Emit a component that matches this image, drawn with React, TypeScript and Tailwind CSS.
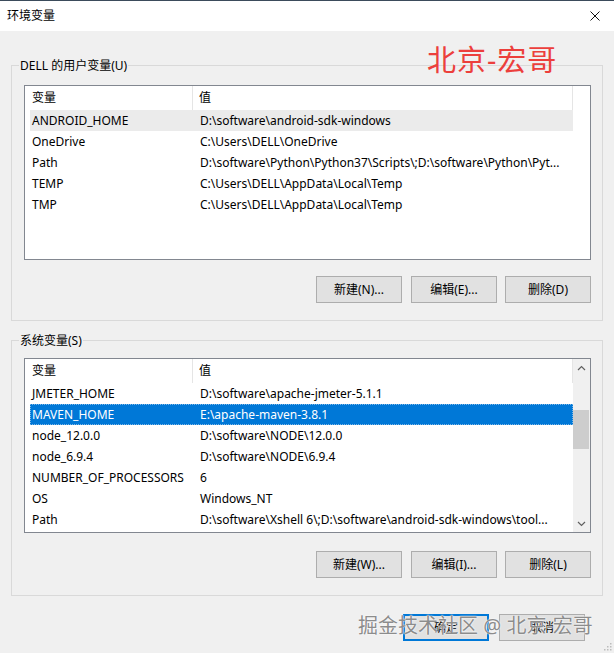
import React from "react";

type Row = { name: string; value: string; state?: "hover" | "selected" };

const userVars: Row[] = [
  { name: "ANDROID_HOME", value: "D:\\software\\android-sdk-windows", state: "hover" },
  { name: "OneDrive", value: "C:\\Users\\DELL\\OneDrive" },
  { name: "Path", value: "D:\\software\\Python\\Python37\\Scripts\\;D:\\software\\Python\\Pyt..." },
  { name: "TEMP", value: "C:\\Users\\DELL\\AppData\\Local\\Temp" },
  { name: "TMP", value: "C:\\Users\\DELL\\AppData\\Local\\Temp" },
];

const systemVars: Row[] = [
  { name: "JMETER_HOME", value: "D:\\software\\apache-jmeter-5.1.1" },
  { name: "MAVEN_HOME", value: "E:\\apache-maven-3.8.1", state: "selected" },
  { name: "node_12.0.0", value: "D:\\software\\NODE\\12.0.0" },
  { name: "node_6.9.4", value: "D:\\software\\NODE\\6.9.4" },
  { name: "NUMBER_OF_PROCESSORS", value: "6" },
  { name: "OS", value: "Windows_NT" },
  { name: "Path", value: "D:\\software\\Xshell 6\\;D:\\software\\android-sdk-windows\\tool..." },
];

const WinButton: React.FC<{ label: string; isDefault?: boolean }> = ({ label, isDefault }) => (
  <button
    type="button"
    className={
      isDefault
        ? "w-[86px] h-[27px] bg-[#e1e1e1] border-2 border-[#0078d7] text-[12px] text-black"
        : "w-[86px] h-[27px] bg-[#e1e1e1] border border-[#adadad] text-[12px] text-black"
    }
  >
    {label}
  </button>
);

const Chevron: React.FC<{ up?: boolean }> = ({ up }) => (
  <svg width="9" height="6" viewBox="0 0 9 6" className="block">
    <path
      d={up ? "M1 5 L4.5 1.5 L8 5" : "M1 1 L4.5 4.5 L8 1"}
      fill="none"
      stroke="#606060"
      strokeWidth="1.2"
    />
  </svg>
);

const VarList: React.FC<{ rows: Row[]; scrollbar?: boolean }> = ({ rows, scrollbar }) => (
  <div className="h-[175px] border border-[#828790] bg-white flex">
    <div className="w-[548px] flex flex-col">
      {/* column header */}
      <div className="h-[24px] flex items-center border-r border-[#e5e5e5] shrink-0">
        <div className="w-[168px] h-full flex items-center pl-[7px] border-r border-[#e5e5e5]">变量</div>
        <div className="flex-1 h-full flex items-center pl-[6px]">值</div>
      </div>
      {rows.map((r) => (
        <div
          key={r.name + r.value}
          className={
            r.state === "selected"
              ? "ml-[5px] h-[21px] shrink-0 flex items-center bg-[#0078d7] text-white outline outline-1 outline-dotted outline-[#7fb7e6] -outline-offset-1"
              : r.state === "hover"
              ? "ml-[5px] h-[21px] shrink-0 flex items-center bg-[#ebebeb]"
              : "ml-[5px] h-[21px] shrink-0 flex items-center"
          }
        >
          <div className="w-[164px] pl-[2px] whitespace-nowrap overflow-hidden">{r.name}</div>
          <div className="flex-1 pl-[6px] whitespace-nowrap overflow-hidden">{r.value}</div>
        </div>
      ))}
    </div>
    {scrollbar ? (
      <div className="w-[17px] bg-[#f0f0f0] flex flex-col">
        <div className="h-[17px] flex items-center justify-center">
          <Chevron up />
        </div>
        <div className="mt-[34px] h-[39px] mr-[1px] bg-[#cdcdcd]" />
        <div className="flex-1" />
        <div className="h-[17px] flex items-center justify-center">
          <Chevron />
        </div>
      </div>
    ) : (
      <div className="w-[17px]" />
    )}
  </div>
);

const App: React.FC = () => {
  return (
    <div
      className="relative w-[614px] h-[653px] overflow-hidden bg-[#f0f0f0] text-[12px] text-black"
      style={{ fontFamily: '"Noto Sans", "Noto Sans CJK SC", sans-serif' }}
    >
      <div className="h-px bg-[#3b4b5b]" />
      {/* title bar */}
      <div className="h-[30px] bg-white flex items-center justify-between pl-[7px] pr-[14px]">
        <span className="text-[12px]">环境变量</span>
        <svg width="10" height="10" viewBox="0 0 10 10">
          <path d="M0.5 0.5 L9.5 9.5 M9.5 0.5 L0.5 9.5" stroke="#111" strokeWidth="1" />
        </svg>
      </div>

      <div className="px-[11px]">
        {/* user variables */}
        <fieldset className="mt-[26px] border border-[#d9d9d9] p-0">
          <legend className="ml-[7px] px-[1px] leading-[17px]">DELL 的用户变量(U)</legend>
          <div className="mt-[11px] ml-[12px] mr-[11px]">
            <VarList rows={userVars} />
            <div className="mt-[16px] flex justify-end gap-[8px]">
              <div className="mr-[1px]">
                <WinButton label="新建(N)..." />
              </div>
              <WinButton label="编辑(E)..." />
              <WinButton label="删除(D)" />
            </div>
          </div>
          <div className="h-[17px]" />
        </fieldset>

        {/* system variables */}
        <fieldset className="mt-[11px] border border-[#d9d9d9] p-0">
          <legend className="ml-[7px] px-[1px] leading-[17px]">系统变量(S)</legend>
          <div className="mt-[9px] ml-[12px] mr-[11px]">
            <VarList rows={systemVars} scrollbar />
            <div className="mt-[18px] flex justify-end gap-[8px]">
              <div className="mr-[1px]">
                <WinButton label="新建(W)..." />
              </div>
              <WinButton label="编辑(I)..." />
              <WinButton label="删除(L)" />
            </div>
          </div>
          <div className="h-[17px]" />
        </fieldset>
      </div>

      <div className="mt-[18px] flex justify-end gap-[10px] pr-[29px]">
        <WinButton label="确定" isDefault />
        <WinButton label="取消" />
      </div>

      {/* red watermark */}
      <div className="absolute left-[427px] top-[41px] text-[29px] leading-[38px] text-[#ec3f3c] tracking-[1px] whitespace-nowrap">
        北京-宏哥
      </div>
      {/* site watermark */}
      <div className="absolute left-[358px] top-[612px] text-[20px] leading-[28px] text-[#8c8c8c] whitespace-nowrap [text-shadow:0_0_2px_#fff,0_0_1px_#fff]">
        掘金技术社区 @ 北京-宏哥
      </div>
      {/* size grip */}
      <svg className="absolute right-[2px] bottom-[2px]" width="8" height="8" viewBox="0 0 8 8">
        <rect x="6" y="0" width="1.5" height="1.5" fill="#bcbcbc" />
        <rect x="3" y="3" width="1.5" height="1.5" fill="#bcbcbc" />
        <rect x="6" y="3" width="1.5" height="1.5" fill="#bcbcbc" />
        <rect x="0" y="6" width="1.5" height="1.5" fill="#bcbcbc" />
        <rect x="3" y="6" width="1.5" height="1.5" fill="#bcbcbc" />
        <rect x="6" y="6" width="1.5" height="1.5" fill="#bcbcbc" />
      </svg>
    </div>
  );
};

export default App;
